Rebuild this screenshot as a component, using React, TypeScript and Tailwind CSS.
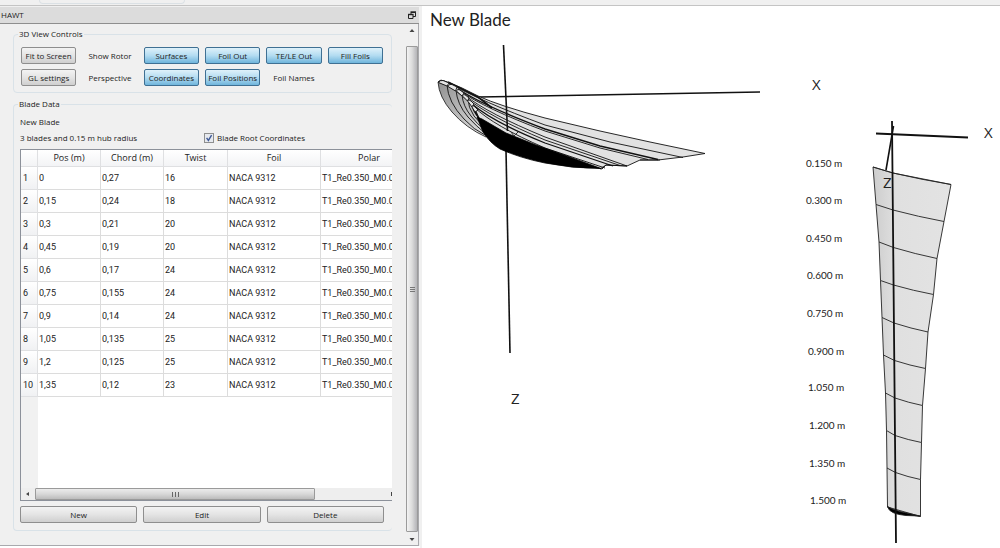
import { useState } from "react";

type ViewButton = { label: string; kind: "push" | "flat" | "active" };

const viewButtons: ViewButton[] = [
  { label: "Fit to Screen", kind: "push" },
  { label: "Show Rotor", kind: "flat" },
  { label: "Surfaces", kind: "active" },
  { label: "Foil Out", kind: "active" },
  { label: "TE/LE Out", kind: "active" },
  { label: "Fill Foils", kind: "active" },
  { label: "GL settings", kind: "push" },
  { label: "Perspective", kind: "flat" },
  { label: "Coordinates", kind: "active" },
  { label: "Foil Positions", kind: "active" },
  { label: "Foil Names", kind: "flat" },
];

const buttonStyles = {
  push: "border-[#8e8e8e] bg-linear-to-b from-[#f3f3f3] via-[#e4e4e4] to-[#cfcfcf]",
  flat: "border-transparent",
  active: "border-[#3f7093] bg-linear-to-b from-[#dff1fa] via-[#b3dcf1] to-[#6fb5dc]",
};

const columns = ["Pos (m)", "Chord (m)", "Twist", "Foil", "Polar"];

const sections = [
  ["0", "0,27", "16"],
  ["0,15", "0,24", "18"],
  ["0,3", "0,21", "20"],
  ["0,45", "0,19", "20"],
  ["0,6", "0,17", "24"],
  ["0,75", "0,155", "24"],
  ["0,9", "0,14", "24"],
  ["1,05", "0,135", "25"],
  ["1,2", "0,125", "25"],
  ["1,35", "0,12", "23"],
];

// leading edge, pitch axis and trailing edge of every blade station
const stations = [
  { label: "0.150 m", x: 806, y: 167, le: [873, 167], mid: [893, 173], te: [951, 184.5] },
  { label: "0.300 m", x: 806, y: 204, le: [876, 204.5], mid: [893, 210], te: [944, 221.5] },
  { label: "0.450 m", x: 806, y: 242, le: [879, 242], mid: [893.5, 247.5], te: [937, 258.5] },
  { label: "0.600 m", x: 807, y: 279, le: [880.5, 280.5], mid: [893.5, 285], te: [933.5, 294.5] },
  { label: "0.750 m", x: 807, y: 317, le: [882, 317.5], mid: [894, 323], te: [928, 332] },
  { label: "0.900 m", x: 808, y: 355, le: [883.5, 355], mid: [894.5, 360.5], te: [925.5, 368.5] },
  { label: "1.050 m", x: 808, y: 391, le: [885.5, 393], mid: [895, 398], te: [922.5, 405.5] },
  { label: "1.200 m", x: 809, y: 429, le: [886.5, 430.5], mid: [895, 435.5], te: [921.5, 442.5] },
  { label: "1.350 m", x: 809, y: 467, le: [887, 468], mid: [895.5, 472.5], te: [920.5, 479.5] },
  { label: "1.500 m", x: 810, y: 504, le: [887.5, 507], mid: [896, 511.5], te: [920.5, 516.5] },
];

const bladeOutline = [
  ...stations.map((s) => s.le),
  ...stations.map((s) => s.te).reverse(),
  stations[0].mid,
].join(" ");

function Arrow({ points }: { points: string }) {
  return (
    <svg viewBox="0 0 6 6" className="size-[6px]">
      <polygon points={points} fill="#444" />
    </svg>
  );
}

function ViewControls() {
  const [pressed, setPressed] = useState(() => viewButtons.map((b) => b.kind === "active"));

  function toggle(index: number) {
    if (viewButtons[index].kind === "push") return;
    setPressed((prev) => prev.map((on, i) => (i === index ? !on : on)));
  }

  return (
    <fieldset className="min-w-0 rounded-sm border border-[#d9e2e8] px-[7px] pt-[6px] pb-[6px]">
      <legend className="-my-[6px] -ml-[3px] h-3 px-px leading-3">3D View Controls</legend>
      <div className="mt-[7px] grid grid-cols-6 gap-x-[6px] gap-y-[5px] pr-px">
        {viewButtons.map((b, i) => (
          <button
            key={b.label}
            type="button"
            onClick={() => toggle(i)}
            className={`h-[17px] rounded-[2px] border whitespace-nowrap ${
              b.kind === "push" ? buttonStyles.push : pressed[i] ? buttonStyles.active : buttonStyles.flat
            }`}
          >
            {b.label}
          </button>
        ))}
      </div>
    </fieldset>
  );
}

function SectionTable() {
  return (
    <div className="flex flex-1 flex-col overflow-hidden border border-r-0 border-[#8c919a] bg-white">
      <div className="flex flex-1 flex-col overflow-hidden">
        <table className="w-[397px] table-fixed border-separate border-spacing-0 text-[9px] leading-3">
          <colgroup>
            <col className="w-[17px]" />
            <col className="w-[63px]" />
            <col className="w-[63px]" />
            <col className="w-[64px]" />
            <col className="w-[93px]" />
            <col />
          </colgroup>
          <thead>
            <tr className="h-[17px] bg-linear-to-b from-white to-[#f2f3f5]">
              <th className="border-r border-b border-[#dfe0e2]" aria-label="Row" />
              {columns.map((c) => (
                <th key={c} className="border-r border-b border-[#dfe0e2] font-normal">
                  {c}
                </th>
              ))}
            </tr>
          </thead>
          <tbody className="font-[family-name:Roboto,sans-serif]">
            {sections.map((row, i) => (
              <tr key={row[0]} className="h-[23px]">
                <th className="border-r border-b border-[#dfe0e2] bg-linear-to-b from-white to-[#f0f1f3] px-[2px] text-left font-normal">
                  {i + 1}
                </th>
                {[...row, "NACA 9312", "T1_Re0.350_M0.0"].map((cell, j) => (
                  <td key={j} className="border-r border-b border-[#dcdcdc] px-px whitespace-nowrap">
                    {cell}
                  </td>
                ))}
              </tr>
            ))}
          </tbody>
        </table>
        <div className="w-[17px] flex-1 bg-[#f1f1f1]" />
      </div>
      <div className="flex h-3 items-stretch bg-[#eeeeee]">
        <div className="flex w-[14px] items-center justify-center">
          <Arrow points="1,3 4,1 4,5" />
        </div>
        <div className="flex w-[280px] items-center justify-center gap-px rounded-[1px] border border-[#9a9a9a] bg-linear-to-b from-[#ececec] via-[#d8d8d8] to-[#bcbcbc]">
          <span className="h-[5px] w-px bg-[#666]" />
          <span className="ml-px h-[5px] w-px bg-[#666]" />
          <span className="ml-px h-[5px] w-px bg-[#666]" />
        </div>
        <div className="flex flex-1 items-center justify-end">
          <span className="h-1 w-px bg-[#444]" />
        </div>
      </div>
    </div>
  );
}

function BladeData() {
  const [rootCoordinates, setRootCoordinates] = useState(true);

  return (
    <fieldset className="flex min-w-0 flex-1 flex-col rounded-sm border border-r-0 border-[#d9e2e8] pb-[7px] pl-[6px]">
      <legend className="-my-[6px] -ml-[2px] h-3 px-px leading-3">Blade Data</legend>
      <div className="flex flex-1 flex-col pt-[12px]">
        <p className="h-3 leading-3">New Blade</p>
        <div className="mt-[4px] mb-[5px] flex h-3 items-center leading-3">
          <p className="w-[184px]">3 blades and 0.15 m hub radius</p>
          <label className="flex items-center gap-[3px]">
            <span className="relative flex size-[10px]">
              <input
                type="checkbox"
                checked={rootCoordinates}
                onChange={(e) => setRootCoordinates(e.target.checked)}
                className="size-[10px] appearance-none border border-[#8e8f8f] bg-[#e6e9ee]"
              />
              {rootCoordinates && (
                <svg viewBox="0 0 10 10" className="pointer-events-none absolute inset-0 size-[10px]">
                  <path d="M2.6 4.8 4.4 7.4 7.6 2.2" fill="none" stroke="#3f5a97" strokeWidth="1.4" />
                </svg>
              )}
            </span>
            Blade Root Coordinates
          </label>
        </div>
        <SectionTable />
        <div className="mt-[5px] grid grid-cols-3 gap-[6px] pr-[8px]">
          {["New", "Edit", "Delete"].map((label) => (
            <button key={label} type="button" className={`h-[17px] rounded-[2px] border ${buttonStyles.push}`}>
              {label}
            </button>
          ))}
        </div>
      </div>
    </fieldset>
  );
}

function VerticalScrollBar() {
  return (
    <div className="flex w-3 flex-col bg-[#f0f0f0]">
      <div className="flex h-[22px] items-start justify-center pt-1">
        <Arrow points="3,1 5.5,4 0.5,4" />
      </div>
      <div className="flex flex-1 flex-col items-center justify-center gap-px rounded-[1px] border border-[#9b9b9b] bg-linear-to-r from-[#f4f4f4] via-[#dcdcdc] to-[#b4b4b8]">
        <span className="h-px w-[5px] bg-[#777]" />
        <span className="h-px w-[5px] bg-[#777]" />
        <span className="h-px w-[5px] bg-[#777]" />
      </div>
      <div className="flex h-[13px] items-center justify-center">
        <Arrow points="0.5,2 5.5,2 3,5" />
      </div>
    </div>
  );
}

function FrontView() {
  return (
    <g strokeLinejoin="round">
      <path d="M478 97 760 92" stroke="#111" strokeWidth="1.6" />
      <path d="M506 150 510 353" stroke="#111" strokeWidth="1.6" />

      {/* pressure side, seen below the noses */}
      <path
        d="M438 82Q439 97 452 112Q466 128 486 137L492 128 478 115 468 100 458 89 449 83 441 80Z"
        fill="url(#pressure)"
        stroke="#111"
        strokeWidth="0.8"
      />
      <g fill="none" stroke="#111" strokeWidth="0.9">
        <path d="M447 85Q448 102 464 119Q474 130 485 135" />
        <path d="M456 90Q457 104 468 117 476 126 486 134" />
        <path d="M462 95Q463 106 471 116 477 124 485 130" />
        <path d="M468 99Q468 107 474 116 478 121 484 126" />
        <path d="M472 104Q472 110 480 119" strokeWidth="1.4" />
        <path d="M475 108Q474 113 480 118" strokeWidth="1.6" />
      </g>

      {/* suction side */}
      <path
        d="M438 82Q440 80 443 80.5L450 83 462 88 478 96Q500 106 545 118L600 131 650 142 705 153.5 683 157 658 160 640 160 627 166 606 165 602 169 560 160 520 143 480 120 475 109 466 99 456 91 448 86Z"
        fill="#e2e2e2"
        stroke="#111"
        strokeWidth="0.9"
      />
      <g fill="none" stroke="#111" strokeWidth="0.9">
        <path d="M449 83Q480 101 545 125L610 142 683 157.5" />
        <path d="M458 89Q484 106 545 129L600 146 658 159.5" strokeWidth="1.4" />
        <path d="M460 91Q484 108 545 131L600 148 648 159.5" />
        <path d="M466 96Q487 113 545 137L627 166" />
        <path d="M468 99Q490 117 545 140L620 165.5" />
        <path d="M472 104Q493 122 545 143L613 166" strokeWidth="1.3" />
        <path d="M474 107Q494 126 545 148L605 168" />
        <path d="M448 82 478 97 492 108" strokeWidth="1.6" />
        <path d="M606 165 600 169M640 160 660 160M627 166 606 165" />
      </g>

      {/* rounded noses */}
      <g fill="#e6e6e6" stroke="#111" strokeWidth="0.9">
        <path d="M438.5 82.5Q440 80 443 80.5L449 83 447 86Z" />
        <path d="M448 86.5Q449 83.5 452 84.5L457 87 455.5 91Z" />
        <path d="M456.5 91Q457 88.5 460 90L464 93 462 96Z" />
        <path d="M462.5 96Q463 93.5 466 95.5L469 98 467.5 101Z" />
        <path d="M468 101.5Q468 99 471 101L474 104 472 107Z" />
        <path d="M472 107Q472 104.5 475 107L478 110 475 112Z" />
      </g>
      <path
        d="M477 117 482 119Q494 126 506 133L536 145 567 156 601 168.5Q572 168.5 545 163Q520 158 500 149Q490 143 483 132Z"
        fill="#000"
        stroke="#000"
        strokeWidth="0.8"
      />
      <path d="M503.5 45 507.5 131" stroke="#111" strokeWidth="1.6" />
      <path d="M511 132 514 136 518 132" fill="none" stroke="#333" />
    </g>
  );
}

function TopView() {
  return (
    <g fill="none" stroke="#222" strokeWidth="0.9">
      <polygon points={bladeOutline} fill="url(#skin)" />
      {stations.map((s) => (
        <path
          key={s.label}
          d={`M${s.le} L${s.mid} Q${(s.mid[0] + s.te[0]) / 2} ${(s.mid[1] + s.te[1]) / 2 + 1} ${s.te}`}
        />
      ))}
      <path d="M887.5 506.5Q891 509 900 511.5L920 516 906 515.5Q889 514 887.5 506.5Z" fill="#000" />
      <path d="M892 121 896 543M876 133.5 968 137.5" stroke="#111" strokeWidth="1.8" />
      <path d="M893.5 126 886 170" stroke="#111" strokeWidth="1.6" />
    </g>
  );
}

function Scene() {
  return (
    <svg viewBox="422 6 578 540" className="block w-full" role="img" aria-label="Blade view">
      <defs>
        <linearGradient id="pressure" x1="0" x2="1" y1="0" y2="1">
          <stop offset="0" stopColor="#8f8f8f" />
          <stop offset="1" stopColor="#e8e8e8" />
        </linearGradient>
        <linearGradient id="skin">
          <stop offset="0" stopColor="#cdcdcd" />
          <stop offset="0.3" stopColor="#e0e0e0" />
          <stop offset="1" stopColor="#e3e3e3" />
        </linearGradient>
      </defs>
      <FrontView />
      <TopView />
      <g fill="#222" className="font-[family-name:Lato,sans-serif]">
        <text x="430" y="26" fontSize="17">
          New Blade
        </text>
        {stations.map((s) => (
          <text key={s.label} x={s.x} y={s.y} fontSize="10">
            {s.label}
          </text>
        ))}
      </g>
      <g fill="#222" fontSize="15">
        <text x="812" y="90">X</text>
        <text x="984" y="138">X</text>
        <text x="511" y="404">Z</text>
        <text x="883" y="188">Z</text>
      </g>
    </svg>
  );
}

export default function App() {
  return (
    <div className="flex min-h-screen flex-col bg-white font-['Open_Sans',sans-serif] text-[8px] text-[#222]">
      <header className="h-[6px] border-b border-[#c4c4c4] bg-[#f0f0f0] pl-[39px]">
        <div className="h-[4px] w-[146px] rounded-b-sm border-x border-b border-[#dbe1e5]" />
      </header>
      <div className="flex flex-1">
        <aside className="flex w-[420px] shrink-0 flex-col bg-[#f0f0f0]">
          <div className="mt-px mr-px flex h-[17px] items-center justify-between border-b border-[#8e8e8e] bg-[#dcdcdc] pr-[3px] pl-px">
            <h1 className="leading-3">HAWT</h1>
            <button type="button" aria-label="Float panel">
              <svg viewBox="0 0 8 8" className="size-[8px]" fill="#dcdcdc" stroke="#222">
                <path d="M3 1.5H7.5V5.5H3Z" />
                <path d="M2.5 1H8" strokeWidth="1.4" />
                <path d="M0.5 3.5H5V7.5H0.5Z" />
                <path d="M0 3.5H5.5" strokeWidth="1.4" />
              </svg>
            </button>
          </div>
          <div className="mr-px flex flex-1 border-r border-b border-[#a9a9ad]">
            <div className="flex min-w-0 flex-1 flex-col gap-[5px] pt-[4px] pr-[14px] pb-[14px] pl-[13px]">
              <ViewControls />
              <BladeData />
            </div>
            <VerticalScrollBar />
          </div>
          <div className="h-[2px] bg-white" />
        </aside>
        <main className="min-w-0 flex-1 border-l-2 border-[#f0f0f0] bg-white">
          <Scene />
        </main>
      </div>
    </div>
  );
}
